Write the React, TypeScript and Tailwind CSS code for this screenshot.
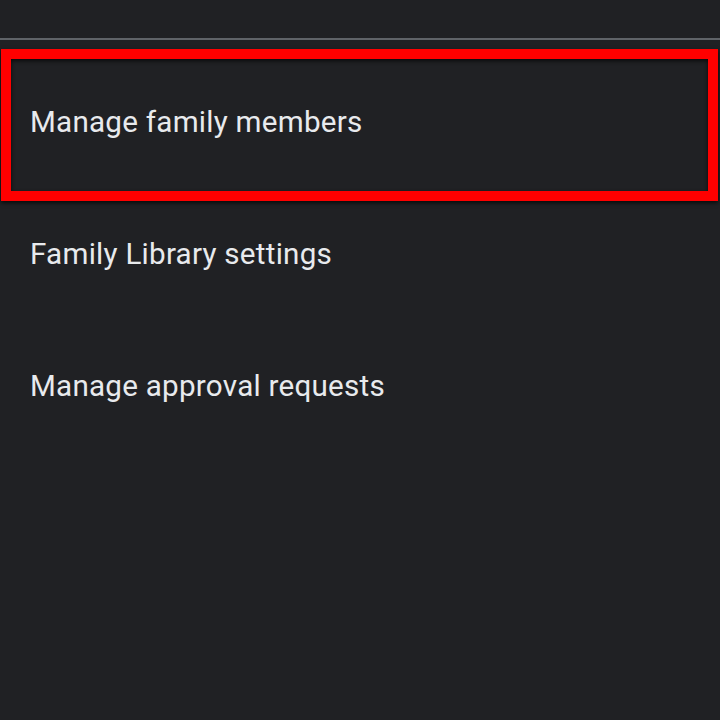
const items = ["Manage family members", "Family Library settings", "Manage approval requests"];

export default function App() {
  return (
    <div
      className="relative w-[720px] h-[720px] overflow-hidden bg-[#202124] text-[#e8eaed]"
      style={{ fontFamily: "Roboto, 'Noto Sans', sans-serif" }}
    >
      {/* top bar */}
      <div className="h-[38px]" />
      <div className="h-[2px] bg-[#5f6368]" />

      {/* menu list */}
      <ul className="pt-[17px]">
        {items.map((label) => (
          <li key={label} className="h-[132px] flex items-center pl-[30px] text-[29.6px] leading-none tracking-[0.25px]">
            {label}
          </li>
        ))}
      </ul>

      {/* highlight outline */}
      <div className="absolute left-[1px] top-[49px] w-[717px] h-[152px] border-[10px] border-[#ff0000] shadow-[0_2px_4px_rgba(0,0,0,0.7),inset_0_2px_4px_rgba(0,0,0,0.7)]" />
    </div>
  );
}
